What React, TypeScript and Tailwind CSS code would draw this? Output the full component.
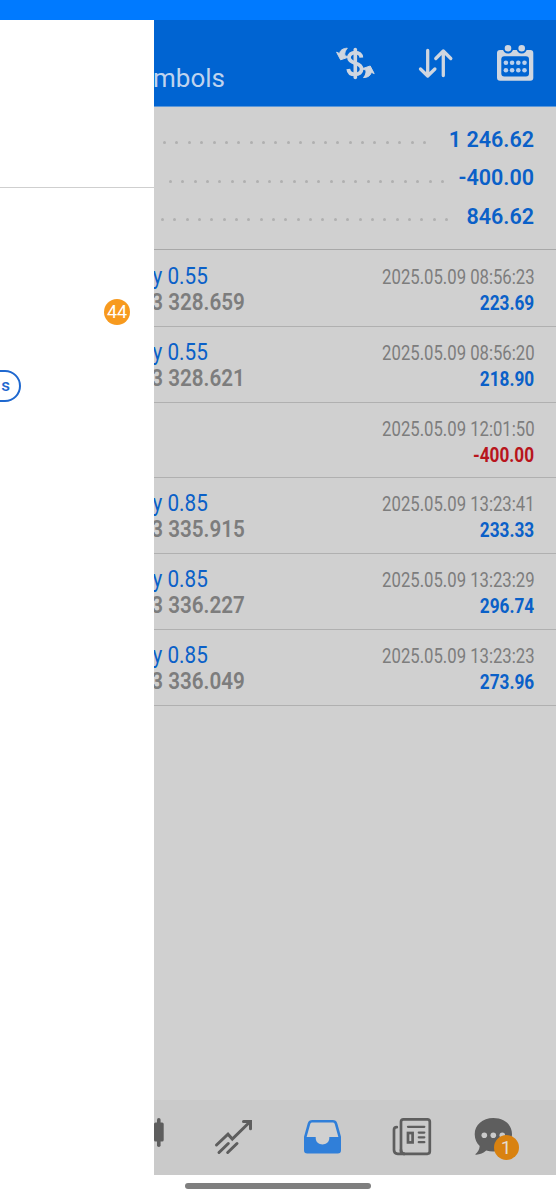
type Deal = {
  volume?: string;
  price?: string;
  time: string;
  profit: string;
};

const totals = [
  { value: "1 246.62", dots: 22, className: "ml-[9px] w-[263px]" },
  { value: "-400.00", dots: 23, className: "ml-[15px] w-[275px]" },
  { value: "846.62", dots: 24, className: "ml-[7px] w-[287px]" },
];

const deals: Deal[] = [
  { volume: "y 0.55", price: "3 328.659", time: "2025.05.09 08:56:23", profit: "223.69" },
  { volume: "y 0.55", price: "3 328.621", time: "2025.05.09 08:56:20", profit: "218.90" },
  { time: "2025.05.09 12:01:50", profit: "-400.00" },
  { volume: "y 0.85", price: "3 335.915", time: "2025.05.09 13:23:41", profit: "233.33" },
  { volume: "y 0.85", price: "3 336.227", time: "2025.05.09 13:23:29", profit: "296.74" },
  { volume: "y 0.85", price: "3 336.049", time: "2025.05.09 13:23:23", profit: "273.96" },
];

const arrowPath = "M13.3 5.2C8.8 5.4 6 7.400 5.600 10.600L2.600 9.200 6.600 16.800l8.200-2.800-3.900-1.300c-.5-2.700.3-5.200 2.400-7.500z";

const CurrencyIcon = () => (
  <svg width="42" height="40" viewBox="0 0 42 40" fill="none">
    <path
      d="M27.3 14.6c-.3-3.400-2.700-5-6.100-5-3.700 0-6.200 1.800-6.200 5 0 3.400 3 4.600 6.300 5.600 3.600 1.100 6.300 2.300 6.300 5.900 0 3.300-2.700 5.300-6.400 5.300-4 0-6.600-1.800-6.900-5.400"
      stroke="#cfd6e0"
      strokeWidth="3.8"
    />
    <path d="M21.3 6.500v28" stroke="#cfd6e0" strokeWidth="3.6" strokeLinecap="round" />
    <g fill="#cfd6e0" stroke="#cfd6e0" strokeLinejoin="round">
      <path d={arrowPath} />
      <path d={arrowPath} transform="rotate(180 21.4 19.9)" />
    </g>
  </svg>
);

const SortIcon = () => (
  <svg
    width="38"
    height="40"
    viewBox="0 0 38 40"
    fill="none"
    stroke="#cfd6e0"
    strokeWidth="3.3"
    strokeLinecap="round"
    strokeLinejoin="round"
  >
    <path d="M10.7 7.500v25M3.500 26l7.200 7 7.200-7" />
    <path d="M26.3 32.500V8M18.800 15.500l7.500-7.500 7.500 7.500" />
  </svg>
);

const CalendarIcon = () => (
  <svg width="40" height="40" viewBox="0 0 40 40">
    <rect x="2" y="7" width="36.3" height="30.7" rx="3" fill="#cfd6e0" />
    <rect x="6.3" y="13.3" width="27.7" height="20.2" rx="3" fill="#0064d2" />
    {[13, 26.7].map((x) => (
      <circle key={x} cx={x} cy="5.3" r="4.3" fill="#cfd6e0" stroke="#0064d2" strokeWidth="2" />
    ))}
    {[19.7, 27.3].map((y) =>
      [10.9, 17.1, 23.3, 29.5].map((x) => (
        <circle key={`${x}-${y}`} cx={x} cy={y} r="2.3" fill="#b9cfec" />
      ))
    )}
  </svg>
);

const CandleIcon = () => (
  <svg width="10" height="40" viewBox="0 0 10 40" fill="#5e5e5e">
    <rect x="0" y="5.5" width="9.7" height="19" rx="1.5" />
    <rect x="3" y="1" width="3.6" height="29" rx="1.8" />
  </svg>
);

const TrendIcon = () => (
  <svg
    width="40"
    height="40"
    viewBox="0 0 40 40"
    fill="none"
    stroke="#5e5e5e"
    strokeWidth="3"
    strokeLinecap="round"
  >
    <path d="M3.5 28 15 17.200l4.300 4.800L36.500 5.200" />
    <path d="M30.5 4.500h7v7.200" />
    <path d="M6 35.500l9.300-9M14.700 35.500l9.300-9" />
  </svg>
);

const InboxIcon = () => (
  <svg width="41" height="40" viewBox="0 0 41 40">
    <path
      d="M10.3 4.300h20.400c1.800 0 2.800.8 3.300 2.400L37.700 20v13.200c0 1.300-.7 2-2 2H5.300c-1.300 0-2-.7-2-2V20L7 6.700c.5-1.600 1.500-2.400 3.300-2.400z"
      fill="#d0d0d0"
      stroke="#307fd9"
      strokeWidth="2.6"
    />
    <path
      d="M3 20h10.700v1c0 8.600 13.600 8.600 13.600 0v-1H38v13.500c0 1-.8 1.800-1.800 1.800H4.800c-1 0-1.800-.8-1.800-1.800z"
      fill="#307fd9"
    />
  </svg>
);

const NewsIcon = () => (
  <svg
    width="42"
    height="40"
    viewBox="0 0 42 40"
    fill="none"
    stroke="#5e5e5e"
    strokeWidth="2.7"
    strokeLinecap="round"
  >
    <rect x="10" y="2.3" width="28.8" height="34.5" rx="2.5" />
    <path d="M5.8 10.200c-2 0-2.800 1-2.800 2.600V33c0 2.500 1.200 3.800 3.700 3.800H14c-2.500 0-4-1.300-4-3.800" />
    <path d="M17 9.800h16.300M27.800 15.600h5.500M27.800 20.300h5.500M27.800 25.200h5.500" strokeWidth="2.3" />
    <rect x="17" y="16" width="4.6" height="9.4" />
  </svg>
);

const ChatIcon = () => (
  <svg width="40" height="40" viewBox="0 0 40 40">
    <path
      d="M20.300 1C9.500 1 1.700 8 1.700 17.200c0 5 2 8.800 5 11.800-.2 3.500-1.900 6.300-4.700 8.600 4.300.3 8.200-1 11.200-4 2.300.6 4.600.9 7.100.9 10.800 0 18.700-7.500 18.700-17.300S31.100 1 20.300 1z"
      fill="#5e5e5e"
    />
    {[11.3, 20.3, 29.3].map((x) => (
      <circle key={x} cx={x} cy="18.3" r="2.8" fill="#cacaca" />
    ))}
  </svg>
);

const Drawer = () => (
  <aside className="flex w-[154px] shrink-0 flex-col bg-white">
    <div className="h-[168px] border-b border-[#cfcfcf]" />
    <div className="flex justify-end pt-[111px] pr-6">
      <span className="flex size-[26px] items-center justify-center rounded-full bg-[#f79a1e] text-[18px] leading-none text-white">
        44
      </span>
    </div>
    <div className="mt-[45px] -ml-5 flex h-[32px] w-[41px] items-center justify-end rounded-r-full border-2 border-[#1f68cf] pr-[9px] text-[17px] font-medium text-[#1f68cf]">
      s
    </div>
  </aside>
);

const Header = () => (
  <header className="flex h-[87px] shrink-0 border-b border-[#5d98d8] bg-[#0064d2]">
    <div className="flex w-[71px] justify-end pt-[42px] text-[26px] leading-8 whitespace-nowrap text-[#bfd3ee]">
      mbols
    </div>
    <div className="ml-[109px] flex pt-[23px]">
      <CurrencyIcon />
      <div className="ml-[41px]">
        <SortIcon />
      </div>
      <div className="ml-10">
        <CalendarIcon />
      </div>
    </div>
  </header>
);

const Totals = () => (
  <section className="flex h-[143px] shrink-0 flex-col border-b border-[#a8a8a8] pt-[13px]">
    {totals.map((total) => (
      <div key={total.value} className="flex h-[38.6px] items-center justify-between pr-[22px]">
        <div className={`flex justify-between pt-[7px] ${total.className}`}>
          {Array.from({ length: total.dots }, (_, i) => (
            <span key={i} className="size-[3px] rounded-full bg-[#b0b0b0]" />
          ))}
        </div>
        <span className="text-[21.5px] leading-none font-semibold whitespace-nowrap text-[#0a60c8]">{total.value}</span>
      </div>
    ))}
  </section>
);

const DealRow = ({ deal }: { deal: Deal }) => (
  <li className="flex h-[75.75px] justify-between border-b border-[#b0b0b0] pr-[21.5px]">
    <div className="flex w-[91px] flex-col pt-[12px] whitespace-nowrap">
      <div className="flex h-[27px] w-[54px] items-center justify-end">
        <span className="origin-right scale-x-[0.88] text-[23.5px] text-[#0a60c8]">{deal.volume}</span>
      </div>
      <div className="flex h-6 items-center justify-end">
        <span className="origin-right scale-x-[0.86] text-[24px] font-semibold text-[#7d7d7d]">{deal.price}</span>
      </div>
    </div>
    <div className="flex flex-col items-end pt-[13px] whitespace-nowrap">
      <span className="h-[26px] origin-right scale-x-[0.835] text-[20px] leading-[26px] text-[#7d7d7d]">
        {deal.time}
      </span>
      <span
        className={`h-[26px] origin-right scale-x-[0.86] text-[20px] leading-[26px] font-bold ${
          deal.profit.startsWith("-") ? "text-[#b8151c]" : "text-[#0a60c8]"
        }`}
      >
        {deal.profit}
      </span>
    </div>
  </li>
);

const TabBar = () => (
  <nav className="mt-auto flex h-[75px] shrink-0 bg-[#cacaca] pt-[17px]">
    <CandleIcon />
    <div className="ml-[49px]">
      <TrendIcon />
    </div>
    <div className="ml-[49px]">
      <InboxIcon />
    </div>
    <div className="ml-12">
      <NewsIcon />
    </div>
    <div className="relative ml-10 h-10">
      <ChatIcon />
      <span className="absolute top-[18px] left-[20.5px] flex size-[25px] items-center justify-center rounded-full bg-[#d98210] text-[19px] leading-none text-[#e5dccf]">
        1
      </span>
    </div>
  </nav>
);

export default function App() {
  return (
    <div className="flex h-[1200px] w-[556px] flex-col overflow-hidden bg-white font-['Roboto',sans-serif]">
      <div className="h-5 shrink-0 bg-[#007aff]" />
      <div className="flex h-[1155px] shrink-0 overflow-hidden">
        <Drawer />
        <main className="flex w-[402px] flex-col overflow-hidden bg-[#d0d0d0]">
          <Header />
          <Totals />
          <ul className="flex flex-col pt-px">
            {deals.map((deal) => (
              <DealRow key={deal.time} deal={deal} />
            ))}
          </ul>
          <TabBar />
        </main>
      </div>
      <div className="mt-2 ml-[185px] h-1.5 w-[186px] rounded-full bg-[#7f7f7f]" />
    </div>
  );
}
